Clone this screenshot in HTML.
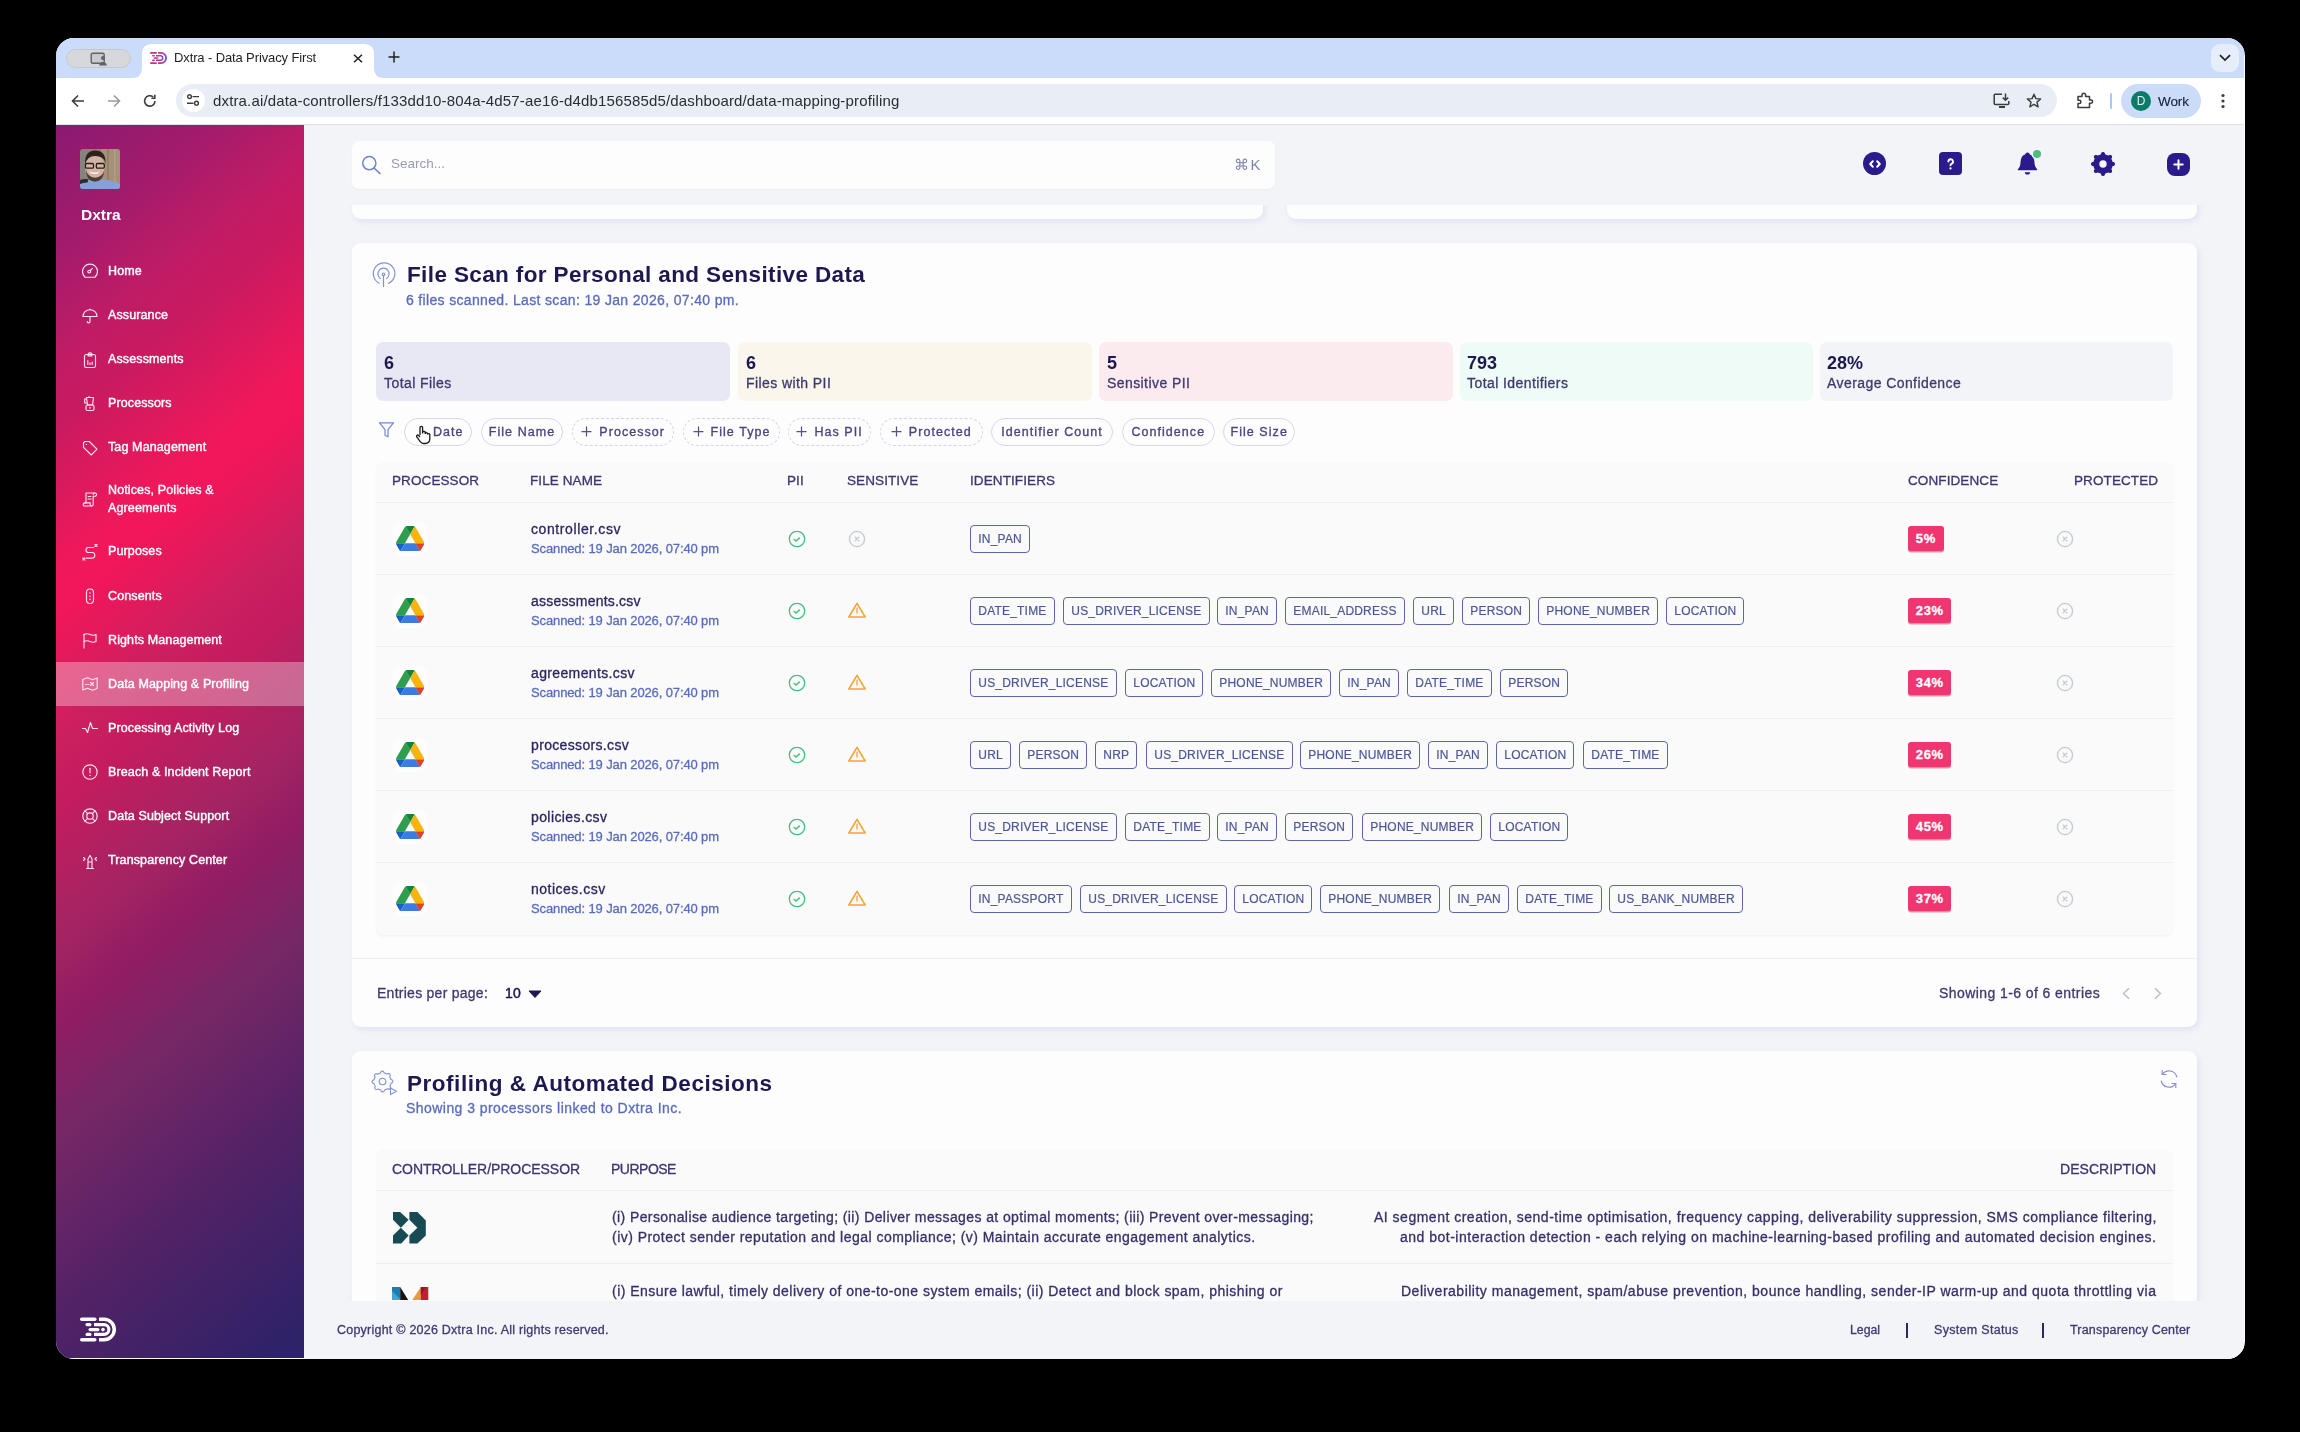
<!DOCTYPE html>
<html><head><meta charset="utf-8"><title>Dxtra</title>
<style>
html,body{margin:0;padding:0;}
body{width:2300px;height:1432px;background:#000;position:relative;overflow:hidden;font-family:"Liberation Sans", sans-serif;}
.t{position:absolute;white-space:nowrap;line-height:1;will-change:transform;}
svg{display:block;}
</style></head><body>
<div id="win" style="position:absolute;left:56px;top:38px;width:2188.5px;height:1320.5px;border-radius:18px;overflow:hidden;background:#fff;">
<div style="position:absolute;left:-56px;top:-38px;width:2300px;height:1432px;">
<div style="position:absolute;left:56px;top:38px;width:2188px;height:40px;background:#cbdcfa;"></div><div style="position:absolute;left:66px;top:49px;width:65px;height:19px;background:#d6d8dc;border:1px solid #c6c8cc;border-radius:10px;box-sizing:border-box;"></div><svg style="position:absolute;left:90px;top:52px;" width="18" height="14" viewBox="0 0 18 14"><rect x="1.2" y="1.2" width="13" height="10" rx="1.5" fill="#c9cacd" stroke="#5f6368" stroke-width="1.4"/><circle cx="13" cy="6" r="2" fill="#5f6368"/><path d="M9.2 13.5c0-2.2 1.7-3.6 3.8-3.6s3.8 1.4 3.8 3.6z" fill="#5f6368"/></svg><svg style="position:absolute;left:132px;top:44px" width="252" height="34" viewBox="0 0 252 34"><path d="M0 34 Q10 34 10 24 L10 10 Q10 0 20 0 L232 0 Q242 0 242 10 L242 24 Q242 34 252 34 Z" fill="#ffffff"/></svg><svg style="position:absolute;left:150px;top:52px;" width="17" height="12" viewBox="0 0 17 12"><defs><linearGradient id="fav" x1="0" x2="1"><stop offset="0" stop-color="#e8245a"/><stop offset="1" stop-color="#7a4fd0"/></linearGradient></defs><g fill="url(#fav)"><rect x="0" y="0" width="7" height="1.8" rx=".9"/><rect x="0" y="10.2" width="7" height="1.8" rx=".9"/><rect x="2" y="3" width="3" height="1.6" rx=".8"/><rect x="2" y="7.4" width="3" height="1.6" rx=".8"/><rect x="3.5" y="5.2" width="5" height="1.6" rx=".8"/></g><path d="M8 0.9 H11 A5.1 5.1 0 0 1 11 11.1 H8" fill="none" stroke="url(#fav)" stroke-width="1.8"/><path d="M6 3.8 H10.5 A2.2 2.2 0 0 1 10.5 8.2 H6" fill="none" stroke="url(#fav)" stroke-width="1.6"/></svg><div class="t" style="left:174px;top:51.00px;font-size:13px;font-weight:400;color:#1f1f1f;letter-spacing:-0.12px;">Dxtra - Data Privacy First</div><svg style="position:absolute;left:353px;top:54px;" width="10" height="9" viewBox="0 0 10 9"><path d="M1 0.8 L9 8.2 M9 0.8 L1 8.2" stroke="#1f1f1f" stroke-width="1.5"/></svg><svg style="position:absolute;left:388px;top:51px;" width="12" height="12" viewBox="0 0 12 12"><path d="M6 0.5 V11.5 M0.5 6 H11.5" stroke="#1f1f1f" stroke-width="1.5"/></svg><div style="position:absolute;left:2211px;top:44px;width:28px;height:28px;background:#e6eefc;border-radius:9px;"></div><svg style="position:absolute;left:2219px;top:54px;" width="12" height="8" viewBox="0 0 12 8"><path d="M1 1.2 L6 6 L11 1.2" fill="none" stroke="#1f1f1f" stroke-width="1.7"/></svg><div style="position:absolute;left:56px;top:78px;width:2188px;height:47px;background:#ffffff;border-bottom:1px solid #dfe1e5;box-sizing:border-box;"></div><svg style="position:absolute;left:71px;top:94px;" width="14" height="14" viewBox="0 0 14 14"><path d="M13 7 H2 M7 1.5 L1.5 7 L7 12.5" fill="none" stroke="#3c3c3c" stroke-width="1.6"/></svg><svg style="position:absolute;left:107px;top:94px;" width="14" height="14" viewBox="0 0 14 14"><path d="M1 7 H12 M7 1.5 L12.5 7 L7 12.5" fill="none" stroke="#9a9a9a" stroke-width="1.6"/></svg><svg style="position:absolute;left:143px;top:94px;" width="14" height="14" viewBox="0 0 14 14"><path d="M12 7 A5.2 5.2 0 1 1 10.2 3" fill="none" stroke="#3c3c3c" stroke-width="1.6"/><path d="M11.8 0.8 V4.2 H8.4" fill="none" stroke="#3c3c3c" stroke-width="1.6"/></svg><div style="position:absolute;left:176px;top:84px;width:1881px;height:33px;background:#e9eef6;border-radius:17px;"></div><div style="position:absolute;left:182px;top:89px;width:23px;height:23px;background:#ffffff;border-radius:12px;"></div><svg style="position:absolute;left:186px;top:93px;" width="15" height="14" viewBox="0 0 15 14"><circle cx="3.5" cy="3.6" r="1.9" fill="none" stroke="#3c3c3c" stroke-width="1.4"/><path d="M6.5 3.6 H13" stroke="#3c3c3c" stroke-width="1.4"/><circle cx="10.5" cy="10.2" r="1.9" fill="none" stroke="#3c3c3c" stroke-width="1.4"/><path d="M1 10.2 H7.5" stroke="#3c3c3c" stroke-width="1.4"/></svg><div class="t" style="left:213px;top:92.80px;font-size:15px;font-weight:400;color:#2a2d31;letter-spacing:0.15px;">dxtra.ai/data-controllers/f133dd10-804a-4d57-ae16-d4db156585d5/dashboard/data-mapping-profiling</div><svg style="position:absolute;left:1993px;top:93px;" width="18" height="16" viewBox="0 0 18 16"><path d="M9 1.2 H2.2 A1 1 0 0 0 1.2 2.2 V10.5 A1 1 0 0 0 2.2 11.5 H14.8 A1 1 0 0 0 15.8 10.5 V8" fill="none" stroke="#3c3c3c" stroke-width="1.5"/><path d="M12.5 0.5 V7 M9.8 4.6 L12.5 7.3 L15.2 4.6" fill="none" stroke="#3c3c3c" stroke-width="1.5"/><rect x="6" y="13" width="6" height="2" fill="#3c3c3c"/></svg><svg style="position:absolute;left:2026px;top:93px;" width="16" height="15" viewBox="0 0 16 15"><path d="M8 1.2 L9.9 5.6 L14.6 6 L11 9.1 L12.1 13.8 L8 11.3 L3.9 13.8 L5 9.1 L1.4 6 L6.1 5.6 Z" fill="none" stroke="#3c3c3c" stroke-width="1.4" stroke-linejoin="round"/></svg><svg style="position:absolute;left:2076px;top:92px;" width="18" height="17" viewBox="0 0 18 17"><path d="M2 4.5 H6 V3 A1.8 1.8 0 0 1 9.6 3 V4.5 H13.5 V8 H15 A1.6 1.6 0 0 1 15 11.2 H13.5 V15.5 H2 V11.6 H3.2 A1.7 1.7 0 0 0 3.2 8.2 H2 Z" fill="none" stroke="#3c3c3c" stroke-width="1.5" stroke-linejoin="round"/></svg><div style="position:absolute;left:2110px;top:93px;width:2px;height:16px;background:#a8c7fa;border-radius:1px;"></div><div style="position:absolute;left:2121px;top:84px;width:80px;height:34px;background:#cbdcf8;border-radius:17px;"></div><div style="position:absolute;left:2131px;top:91px;width:20px;height:20px;background:#0b7a68;border-radius:50%;"></div><div class="t" style="left:1641px;width:1000px;text-align:center;top:95.34px;font-size:12px;font-weight:400;color:#d9f5ee;letter-spacing:0px;">D</div><div class="t" style="left:2157.5px;top:94.77px;font-size:13.5px;font-weight:400;color:#17213d;letter-spacing:-0.1px;-webkit-text-stroke:0.15px #17213d;">Work</div><svg style="position:absolute;left:2220px;top:93px;" width="6" height="16" viewBox="0 0 6 16"><circle cx="3" cy="2.5" r="1.6" fill="#3c3c3c"/><circle cx="3" cy="8" r="1.6" fill="#3c3c3c"/><circle cx="3" cy="13.5" r="1.6" fill="#3c3c3c"/></svg><div style="position:absolute;left:56px;top:125px;width:248px;height:1233px;background:linear-gradient(140deg,#8b1a71 0%,#a11b6c 8.5%,#bf1c66 16%,#c91a60 21%,#f0185b 31%,#f2165a 34%,#cb2060 43%,#c51c5e 47%,#a32463 57%,#931c63 62%,#772766 70%,#522266 83%,#2e2268 98%);"></div><svg style="position:absolute;left:80px;top:149px;border-radius:3px" width="40" height="40" viewBox="0 0 40 40">
<rect width="40" height="40" fill="#85837a"/>
<rect x="21" y="0" width="19" height="40" fill="#a5917a"/>
<rect x="27" y="0" width="2" height="40" fill="#8e7a62" opacity=".7"/>
<rect x="34" y="0" width="1.5" height="40" fill="#b8a58c" opacity=".7"/>
<path d="M0 40 V33.5 Q6 30.5 11 30.5 L15 33 L19 30.5 Q30 30 40 35 V40 Z" fill="#86a1da"/>
<path d="M0 31 Q4 29.5 8.5 30.2 L7.5 33.5 Q3 33.5 0 35 Z" fill="#2e2b29"/>
<ellipse cx="15" cy="18.5" rx="10" ry="12.5" fill="#d6b3a3"/>
<path d="M5 15.5 Q4.5 1.5 15 1.5 Q26 1.5 25.5 14.5 Q24.5 7 15 7 Q7 7 5 15.5 Z" fill="#2b231e"/>
<path d="M5.8 20 Q6.5 32.5 15 32.5 Q23.5 32.5 24.6 20 Q23 28 15 28.8 Q7.5 28 5.8 20 Z" fill="#4e3d35"/>
<rect x="5.5" y="14.5" width="8" height="4.6" rx="1.2" fill="none" stroke="#1e1e1e" stroke-width="1.3"/>
<rect x="16.3" y="14.5" width="8" height="4.6" rx="1.2" fill="none" stroke="#1e1e1e" stroke-width="1.3"/>
<path d="M8.5 22.5 Q15 27.5 20 22.5 Q15 24.8 8.5 22.5 Z" fill="#ffffff"/>
</svg><div class="t" style="left:81px;top:206.98px;font-size:15.5px;font-weight:700;color:#ffffff;letter-spacing:0px;">Dxtra</div><div style="position:absolute;left:56px;top:662px;width:248px;height:43.5px;background:rgba(255,255,255,0.32);"></div><svg style="position:absolute;left:81px;top:262.3px;overflow:visible;" width="18" height="18" viewBox="0 0 18 18"><path d="M4 15.2 H14 A7.5 7.5 0 1 0 4 15.2 Z" fill="none" stroke="#ffe3f1" stroke-width="1.15" stroke-linecap="round" stroke-linejoin="round"/><circle cx="8.2" cy="9.6" r="1.4" fill="none" stroke="#ffe3f1" stroke-width="1.15" stroke-linecap="round" stroke-linejoin="round"/><path d="M9.3 8.5 L11.5 6.3" fill="none" stroke="#ffe3f1" stroke-width="1.15" stroke-linecap="round" stroke-linejoin="round"/></svg><div class="t" style="left:108px;top:264.72px;font-size:12.5px;font-weight:400;color:#ffffff;letter-spacing:0.12px;-webkit-text-stroke:0.4px #ffffff;">Home</div><svg style="position:absolute;left:81px;top:306.7px;overflow:visible;" width="18" height="18" viewBox="0 0 18 18"><path d="M2 9.5 A7 6.8 0 0 1 16 9.5 Z" fill="none" stroke="#ffe3f1" stroke-width="1.15" stroke-linecap="round" stroke-linejoin="round"/><path d="M9 9.5 V14.5 A1.4 1.4 0 0 1 6.2 14.5" fill="none" stroke="#ffe3f1" stroke-width="1.15" stroke-linecap="round" stroke-linejoin="round"/><path d="M9 2.7 V2" fill="none" stroke="#ffe3f1" stroke-width="1.15" stroke-linecap="round" stroke-linejoin="round"/></svg><div class="t" style="left:108px;top:309.12px;font-size:12.5px;font-weight:400;color:#ffffff;letter-spacing:0.12px;-webkit-text-stroke:0.4px #ffffff;">Assurance</div><svg style="position:absolute;left:81px;top:351px;overflow:visible;" width="18" height="18" viewBox="0 0 18 18"><rect x="3.5" y="3.5" width="11" height="13" rx="1.8" fill="none" stroke="#ffe3f1" stroke-width="1.15" stroke-linecap="round" stroke-linejoin="round"/><path d="M7 3.5 A2 1.6 0 0 1 11 3.5 V4.8 H7 Z" fill="none" stroke="#ffe3f1" stroke-width="1.15" stroke-linecap="round" stroke-linejoin="round"/><path d="M6.8 13.5 V9.6 M9 13.5 V11.8 M11.2 13.5 V11" fill="none" stroke="#ffe3f1" stroke-width="1.15" stroke-linecap="round" stroke-linejoin="round"/></svg><div class="t" style="left:108px;top:353.42px;font-size:12.5px;font-weight:400;color:#ffffff;letter-spacing:0.12px;-webkit-text-stroke:0.4px #ffffff;">Assessments</div><svg style="position:absolute;left:81px;top:395px;overflow:visible;" width="18" height="18" viewBox="0 0 18 18"><path d="M5.5 2.5 H12.5 L11.5 10 H6.5 Z" fill="none" stroke="#ffe3f1" stroke-width="1.15" stroke-linecap="round" stroke-linejoin="round"/><path d="M5.5 4 H3.7 V8 H5.8" fill="none" stroke="#ffe3f1" stroke-width="1.15" stroke-linecap="round" stroke-linejoin="round"/><rect x="5" y="10" width="8" height="5.5" rx="1.5" fill="none" stroke="#ffe3f1" stroke-width="1.15" stroke-linecap="round" stroke-linejoin="round"/><path d="M8.5 12.8 H9.5 M8 2.5 V1.6" fill="none" stroke="#ffe3f1" stroke-width="1.15" stroke-linecap="round" stroke-linejoin="round"/></svg><div class="t" style="left:108px;top:397.42px;font-size:12.5px;font-weight:400;color:#ffffff;letter-spacing:0.12px;-webkit-text-stroke:0.4px #ffffff;">Processors</div><svg style="position:absolute;left:81px;top:438.8px;overflow:visible;" width="18" height="18" viewBox="0 0 18 18"><path d="M2.5 3.8 V8.3 L10.2 16 L16 10.2 L8.3 2.5 H3.8 Z" fill="none" stroke="#ffe3f1" stroke-width="1.15" stroke-linecap="round" stroke-linejoin="round"/><circle cx="5.4" cy="5.4" r=".7" fill="#ffe3f1"/></svg><div class="t" style="left:108px;top:441.22px;font-size:12.5px;font-weight:400;color:#ffffff;letter-spacing:0.12px;-webkit-text-stroke:0.4px #ffffff;">Tag Management</div><svg style="position:absolute;left:81px;top:490.1px;overflow:visible;" width="18" height="18" viewBox="0 0 18 18"><path d="M5 3 H14 A1.6 1.6 0 0 1 14 6.2 H12.2 V14.5 A1.5 1.5 0 0 1 10.7 16 H3.8 A1.6 1.6 0 0 1 3.8 12.8 H5 Z" fill="none" stroke="#ffe3f1" stroke-width="1.15" stroke-linecap="round" stroke-linejoin="round"/><path d="M10.7 16 A1.5 1.5 0 0 1 9.2 14.5 V12.8 H3.8 M7.2 6.5 H10 M7.2 9 H10 M14 3 A1.6 1.6 0 0 0 12.2 4.6" fill="none" stroke="#ffe3f1" stroke-width="1.15" stroke-linecap="round" stroke-linejoin="round"/></svg><div class="t" style="left:108px;top:484.02px;font-size:12.5px;font-weight:400;color:#ffffff;letter-spacing:0.12px;-webkit-text-stroke:0.4px #ffffff;">Notices, Policies &</div><svg style="position:absolute;left:81px;top:543px;overflow:visible;" width="18" height="18" viewBox="0 0 18 18"><path d="M12.5 4.5 H7.5 A2.5 2.5 0 0 0 7.5 9.5 H11 A2.8 2.8 0 0 1 11 15.1 H5" fill="none" stroke="#ffe3f1" stroke-width="1.15" stroke-linecap="round" stroke-linejoin="round"/><path d="M14 1.5 L16 3.5 M16 1.5 L14 3.5 M1.8 15 L3.8 17 M3.8 15 L1.8 17" fill="none" stroke="#ffe3f1" stroke-width="1.15" stroke-linecap="round" stroke-linejoin="round"/></svg><div class="t" style="left:108px;top:545.42px;font-size:12.5px;font-weight:400;color:#ffffff;letter-spacing:0.12px;-webkit-text-stroke:0.4px #ffffff;">Purposes</div><svg style="position:absolute;left:81px;top:587.3px;overflow:visible;" width="18" height="18" viewBox="0 0 18 18"><rect x="5.5" y="2" width="7" height="14.5" rx="3.5" fill="none" stroke="#ffe3f1" stroke-width="1.15" stroke-linecap="round" stroke-linejoin="round"/><circle cx="9" cy="6" r=".8" fill="#ffe3f1"/><circle cx="9" cy="9.2" r=".8" fill="#ffe3f1"/><circle cx="9" cy="12.4" r=".8" fill="#ffe3f1"/></svg><div class="t" style="left:108px;top:589.72px;font-size:12.5px;font-weight:400;color:#ffffff;letter-spacing:0.12px;-webkit-text-stroke:0.4px #ffffff;">Consents</div><svg style="position:absolute;left:81px;top:631.3px;overflow:visible;" width="18" height="18" viewBox="0 0 18 18"><path d="M3 17 V3" fill="none" stroke="#ffe3f1" stroke-width="1.15" stroke-linecap="round" stroke-linejoin="round"/><path d="M3 3.5 Q6 2 9 3.5 Q12 5 15 3.5 V10.5 Q12 12 9 10.5 Q6 9 3 10.5" fill="none" stroke="#ffe3f1" stroke-width="1.15" stroke-linecap="round" stroke-linejoin="round"/></svg><div class="t" style="left:108px;top:633.72px;font-size:12.5px;font-weight:400;color:#ffffff;letter-spacing:0.12px;-webkit-text-stroke:0.4px #ffffff;">Rights Management</div><svg style="position:absolute;left:81px;top:675.3px;overflow:visible;" width="18" height="18" viewBox="0 0 18 18"><path d="M1.8 4.5 L6.5 2.8 L11.5 4.8 L16.2 3 V13.5 L11.5 15.2 L6.5 13.2 L1.8 15 Z" fill="none" stroke="#ffe3f1" stroke-width="1.15" stroke-linecap="round" stroke-linejoin="round"/><path d="M9.5 7.5 L12.5 10.5 M12.5 7.5 L9.5 10.5 M4.5 9.5 H5.5 M6.8 9.5 H7.8" fill="none" stroke="#ffe3f1" stroke-width="1.15" stroke-linecap="round" stroke-linejoin="round"/></svg><div class="t" style="left:108px;top:677.72px;font-size:12.5px;font-weight:400;color:#ffffff;letter-spacing:0.12px;-webkit-text-stroke:0.4px #ffffff;">Data Mapping &amp; Profiling</div><svg style="position:absolute;left:81px;top:719.3px;overflow:visible;" width="18" height="18" viewBox="0 0 18 18"><path d="M1.5 9.5 H4.5 L6.5 13.5 L9.5 3.5 L11.5 9.5 H16.5" fill="none" stroke="#ffe3f1" stroke-width="1.15" stroke-linecap="round" stroke-linejoin="round"/></svg><div class="t" style="left:108px;top:721.72px;font-size:12.5px;font-weight:400;color:#ffffff;letter-spacing:0.12px;-webkit-text-stroke:0.4px #ffffff;">Processing Activity Log</div><svg style="position:absolute;left:81px;top:763.3px;overflow:visible;" width="18" height="18" viewBox="0 0 18 18"><circle cx="9" cy="9" r="7.2" fill="none" stroke="#ffe3f1" stroke-width="1.15" stroke-linecap="round" stroke-linejoin="round"/><path d="M9 5.2 V9.8" fill="none" stroke="#ffe3f1" stroke-width="1.15" stroke-linecap="round" stroke-linejoin="round"/><circle cx="9" cy="12.5" r=".8" fill="#ffe3f1"/></svg><div class="t" style="left:108px;top:765.72px;font-size:12.5px;font-weight:400;color:#ffffff;letter-spacing:0.12px;-webkit-text-stroke:0.4px #ffffff;">Breach &amp; Incident Report</div><svg style="position:absolute;left:81px;top:807.4px;overflow:visible;" width="18" height="18" viewBox="0 0 18 18"><circle cx="9" cy="9" r="7.2" fill="none" stroke="#ffe3f1" stroke-width="1.15" stroke-linecap="round" stroke-linejoin="round"/><circle cx="9" cy="9" r="3.2" fill="none" stroke="#ffe3f1" stroke-width="1.15" stroke-linecap="round" stroke-linejoin="round"/><path d="M3.9 3.9 L6.7 6.7 M14.1 3.9 L11.3 6.7 M3.9 14.1 L6.7 11.3 M14.1 14.1 L11.3 11.3" fill="none" stroke="#ffe3f1" stroke-width="1.15" stroke-linecap="round" stroke-linejoin="round"/></svg><div class="t" style="left:108px;top:809.82px;font-size:12.5px;font-weight:400;color:#ffffff;letter-spacing:0.12px;-webkit-text-stroke:0.4px #ffffff;">Data Subject Support</div><svg style="position:absolute;left:81px;top:851.8px;overflow:visible;" width="18" height="18" viewBox="0 0 18 18"><path d="M7 16.5 V7 L9 3.5 L11 7 V16.5 Z M5.5 16.5 H12.5 M7 10 H11" fill="none" stroke="#ffe3f1" stroke-width="1.15" stroke-linecap="round" stroke-linejoin="round"/><path d="M2.5 5.5 L4 7 L2.5 8.5 M15.5 5.5 L14 7 L15.5 8.5" fill="none" stroke="#ffe3f1" stroke-width="1.15" stroke-linecap="round" stroke-linejoin="round"/></svg><div class="t" style="left:108px;top:854.22px;font-size:12.5px;font-weight:400;color:#ffffff;letter-spacing:0.12px;-webkit-text-stroke:0.4px #ffffff;">Transparency Center</div><div class="t" style="left:108px;top:502.42px;font-size:12.5px;font-weight:400;color:#ffffff;letter-spacing:0.12px;-webkit-text-stroke:0.4px #ffffff;">Agreements</div><svg style="position:absolute;left:80px;top:1317px;" width="37" height="25" viewBox="0 0 37 25"><g fill="#ffffff"><rect x="0" y="0.5" width="16.5" height="3.5" rx="1.75"/><rect x="0" y="21" width="16.5" height="3.5" rx="1.75"/><rect x="5.5" y="6" width="6" height="3.2" rx="1.6"/><rect x="5.5" y="15.8" width="6" height="3.2" rx="1.6"/><rect x="8.5" y="11" width="11" height="3.2" rx="1.6"/><circle cx="23" cy="12.6" r="1.8"/></g><path d="M19 2.25 H24 A10.25 10.25 0 0 1 24 22.75 H19" fill="none" stroke="#fff" stroke-width="3.5"/><path d="M14 7.6 H24 A4.9 4.9 0 0 1 24 17.4 H14" fill="none" stroke="#fff" stroke-width="3.2"/></svg><div style="position:absolute;left:304px;top:125px;width:1940px;height:1233px;background:#f3f4f8;"></div><div style="position:absolute;left:352px;top:150px;width:911px;height:68.5px;background:#fdfdfd;border-radius:9px;box-shadow:2px 3px 6px rgba(93,80,200,0.10);"></div><div style="position:absolute;left:1287px;top:150px;width:910px;height:68.5px;background:#fdfdfd;border-radius:9px;box-shadow:2px 3px 6px rgba(93,80,200,0.10);"></div><div style="position:absolute;left:304px;top:125px;width:1940px;height:79.5px;background:#f3f4f8;"></div><div style="position:absolute;left:352px;top:141px;width:923px;height:48px;background:#fdfdfe;border-radius:7px;box-shadow:0 1px 2px rgba(60,60,120,0.04);"></div><svg style="position:absolute;left:360px;top:154px;" width="24" height="24" viewBox="0 0 24 24"><circle cx="9.3" cy="9.2" r="6.6" fill="none" stroke="#6f84cc" stroke-width="1.5"/><path d="M14 14 L20 19.6" stroke="#6f84cc" stroke-width="1.5" stroke-linecap="round"/></svg><div class="t" style="left:391px;top:157.47px;font-size:13.5px;font-weight:400;color:#9a9ab3;letter-spacing:0px;">Search...</div><div class="t" style="right:1037.5px;top:157.30px;font-size:15px;font-weight:400;color:#7f84ad;letter-spacing:1.5px;">⌘K</div><div style="position:absolute;left:1863.1px;top:152.1px;width:23.4px;height:23.4px;background:#2a1a8c;border-radius:50%;"></div><svg style="position:absolute;left:1866px;top:155px;" width="18" height="18" viewBox="0 0 18 18"><path d="M6.8 6.3 L4.2 9 L6.8 11.7 M11.2 6.3 L13.8 9 L11.2 11.7" fill="none" stroke="#fff" stroke-width="2" stroke-linecap="round" stroke-linejoin="round"/></svg><div style="position:absolute;left:1939.4px;top:152.4px;width:23px;height:23px;background:#2a1a8c;border-radius:4px;"></div><svg style="position:absolute;left:1939.4px;top:152.4px;" width="23" height="23" viewBox="0 0 23 23"><path d="M9.4 9.6 A2.3 2.3 0 1 1 12.3 11.8 Q11.5 12.2 11.5 13.3" fill="none" stroke="#fff" stroke-width="1.9" stroke-linecap="round"/><circle cx="11.5" cy="16.4" r="1.1" fill="#fff"/></svg><svg style="position:absolute;left:2015px;top:150px;" width="26" height="27" viewBox="0 0 26 27"><path d="M12.5 2.5 Q10.5 2.5 10.3 4.2 Q6 5.8 5.6 11.5 Q5.4 16.5 3.5 18.5 Q2.2 19.7 3 20.2 H22 Q22.8 19.7 21.5 18.5 Q19.6 16.5 19.4 11.5 Q19 5.8 14.7 4.2 Q14.5 2.5 12.5 2.5Z" fill="#2a1a8c"/><path d="M9.8 22.2 H15.2 A2.7 2.3 0 0 1 9.8 22.2Z" fill="#2a1a8c"/></svg><div style="position:absolute;left:2033.2px;top:149.9px;width:8px;height:8px;background:#4cbf80;border-radius:50%;box-shadow:0 0 0 1.5px #f3f4f8;"></div><svg style="position:absolute;left:2090.8px;top:151.9px;" width="24" height="24" viewBox="0 0 24 24"><polygon points="23.50,12.00 23.01,13.08 21.02,13.79 20.80,14.67 20.50,15.52 20.11,16.34 19.65,17.11 20.56,19.02 20.13,20.13 19.02,20.56 17.11,19.65 16.34,20.11 15.52,20.50 14.67,20.80 13.79,21.02 13.08,23.01 12.00,23.50 10.92,23.01 10.21,21.02 9.33,20.80 8.48,20.50 7.66,20.11 6.89,19.65 4.98,20.56 3.87,20.13 3.44,19.02 4.35,17.11 3.89,16.34 3.50,15.52 3.20,14.67 2.98,13.79 0.99,13.08 0.50,12.00 0.99,10.92 2.98,10.21 3.20,9.33 3.50,8.48 3.89,7.66 4.35,6.89 3.44,4.98 3.87,3.87 4.98,3.44 6.89,4.35 7.66,3.89 8.48,3.50 9.33,3.20 10.21,2.98 10.92,0.99 12.00,0.50 13.08,0.99 13.79,2.98 14.67,3.20 15.52,3.50 16.34,3.89 17.11,4.35 19.02,3.44 20.13,3.87 20.56,4.98 19.65,6.89 20.11,7.66 20.50,8.48 20.80,9.33 21.02,10.21 23.01,10.92" fill="#2a1a8c" stroke="#2a1a8c" stroke-width="1.2" stroke-linejoin="round"/><circle cx="12" cy="12" r="3.7" fill="#f3f4f8"/></svg><div style="position:absolute;left:2167.4px;top:152.6px;width:23px;height:23px;background:#2a1a8c;border-radius:8px;"></div><svg style="position:absolute;left:2167.4px;top:152.6px;" width="23" height="23" viewBox="0 0 23 23"><path d="M11.5 7.3 V15.7 M7.3 11.5 H15.7" stroke="#fff" stroke-width="2" stroke-linecap="round"/></svg><div style="position:absolute;left:352px;top:243px;width:1845px;height:784px;background:#fdfdfd;border-radius:9px;box-shadow:2px 3px 6px rgba(93,80,200,0.10);"></div><svg style="position:absolute;left:370px;top:261px;" width="27" height="27" viewBox="0 0 27 27"><g fill="none" stroke="#8192d2" stroke-width="1.2" stroke-linecap="round"><path d="M9.2 22.2 A10.8 10.8 0 1 1 18.6 22.4"/><path d="M10.4 17.4 A5.6 5.6 0 1 1 16.6 17.4"/><circle cx="13.5" cy="13.3" r="1.3"/><path d="M13.5 14.8 V25.5"/></g></svg><div class="t" style="left:407px;top:263.95px;font-size:22.5px;font-weight:700;color:#1c1850;letter-spacing:0.38px;">File Scan for Personal and Sensitive Data</div><div class="t" style="left:406px;top:292.75px;font-size:14px;font-weight:400;color:#5a6bbf;letter-spacing:0.34px;-webkit-text-stroke:0.3px #5a6bbf;">6 files scanned. Last scan: 19 Jan 2026, 07:40 pm.</div><div style="position:absolute;left:376px;top:341.5px;width:353.5px;height:59.5px;background:#e8e8f4;border-radius:7px;"></div><div class="t" style="left:383.5px;top:353.96px;font-size:18px;font-weight:700;color:#1c1850;letter-spacing:0px;">6</div><div class="t" style="left:383.5px;top:376.35px;font-size:14px;font-weight:400;color:#3e3970;letter-spacing:0.42px;-webkit-text-stroke:0.3px #3e3970;">Total Files</div><div style="position:absolute;left:738px;top:341.5px;width:353.5px;height:59.5px;background:#faf6ec;border-radius:7px;"></div><div class="t" style="left:745.5px;top:353.96px;font-size:18px;font-weight:700;color:#1c1850;letter-spacing:0px;">6</div><div class="t" style="left:745.5px;top:376.35px;font-size:14px;font-weight:400;color:#3e3970;letter-spacing:0.42px;-webkit-text-stroke:0.3px #3e3970;">Files with PII</div><div style="position:absolute;left:1099px;top:341.5px;width:353.5px;height:59.5px;background:#fbebef;border-radius:7px;"></div><div class="t" style="left:1106.5px;top:353.96px;font-size:18px;font-weight:700;color:#1c1850;letter-spacing:0px;">5</div><div class="t" style="left:1106.5px;top:376.35px;font-size:14px;font-weight:400;color:#3e3970;letter-spacing:0.42px;-webkit-text-stroke:0.3px #3e3970;">Sensitive PII</div><div style="position:absolute;left:1459.5px;top:341.5px;width:353.5px;height:59.5px;background:#eefbf6;border-radius:7px;"></div><div class="t" style="left:1467.0px;top:353.96px;font-size:18px;font-weight:700;color:#1c1850;letter-spacing:0px;">793</div><div class="t" style="left:1467.0px;top:376.35px;font-size:14px;font-weight:400;color:#3e3970;letter-spacing:0.42px;-webkit-text-stroke:0.3px #3e3970;">Total Identifiers</div><div style="position:absolute;left:1819.5px;top:341.5px;width:353.5px;height:59.5px;background:#f3f4f8;border-radius:7px;"></div><div class="t" style="left:1827.0px;top:353.96px;font-size:18px;font-weight:700;color:#1c1850;letter-spacing:0px;">28%</div><div class="t" style="left:1827.0px;top:376.35px;font-size:14px;font-weight:400;color:#3e3970;letter-spacing:0.42px;-webkit-text-stroke:0.3px #3e3970;">Average Confidence</div><svg style="position:absolute;left:378px;top:421px;" width="17" height="18" viewBox="0 0 17 18"><path d="M1.5 1.8 H15.5 L10 8.6 V15.8 L7 14.2 V8.6 Z" fill="none" stroke="#7088d8" stroke-width="1.2" stroke-linejoin="round"/></svg><div style="position:absolute;left:404px;top:418px;width:67.5px;height:27.5px;box-sizing:border-box;border:1px solid #d5d7ec;border-radius:14px;display:flex;align-items:center;justify-content:flex-end;padding-right:7px;font-size:12.5px;font-weight:400;color:#4a4580;letter-spacing:1.05px;-webkit-text-stroke:0.35px #4a4580;will-change:transform;white-space:nowrap;padding-left:0px">Date</div><div style="position:absolute;left:480.6px;top:418px;width:82.0px;height:27.5px;box-sizing:border-box;border:1px solid #d5d7ec;border-radius:14px;display:flex;align-items:center;justify-content:center;font-size:12.5px;font-weight:400;color:#4a4580;letter-spacing:1.05px;-webkit-text-stroke:0.35px #4a4580;will-change:transform;white-space:nowrap;padding-left:0px">File Name</div><div style="position:absolute;left:571.7px;top:418px;width:102.29999999999995px;height:27.5px;box-sizing:border-box;border:1px dashed #d3d5e6;border-radius:14px;display:flex;align-items:center;justify-content:center;font-size:12.5px;font-weight:400;color:#4a4580;letter-spacing:1.05px;-webkit-text-stroke:0.35px #4a4580;will-change:transform;white-space:nowrap;padding-left:0px"><svg width="11" height="11" viewBox="0 0 11 11" style="margin-right:7px;flex:none"><path d="M5.5 0.5 V10.5 M0.5 5.5 H10.5" stroke="#55508a" stroke-width="1.25"/></svg>Processor</div><div style="position:absolute;left:683px;top:418px;width:97px;height:27.5px;box-sizing:border-box;border:1px dashed #d3d5e6;border-radius:14px;display:flex;align-items:center;justify-content:center;font-size:12.5px;font-weight:400;color:#4a4580;letter-spacing:1.05px;-webkit-text-stroke:0.35px #4a4580;will-change:transform;white-space:nowrap;padding-left:0px"><svg width="11" height="11" viewBox="0 0 11 11" style="margin-right:7px;flex:none"><path d="M5.5 0.5 V10.5 M0.5 5.5 H10.5" stroke="#55508a" stroke-width="1.25"/></svg>File Type</div><div style="position:absolute;left:788.4px;top:418px;width:83.20000000000005px;height:27.5px;box-sizing:border-box;border:1px dashed #d3d5e6;border-radius:14px;display:flex;align-items:center;justify-content:center;font-size:12.5px;font-weight:400;color:#4a4580;letter-spacing:1.05px;-webkit-text-stroke:0.35px #4a4580;will-change:transform;white-space:nowrap;padding-left:0px"><svg width="11" height="11" viewBox="0 0 11 11" style="margin-right:7px;flex:none"><path d="M5.5 0.5 V10.5 M0.5 5.5 H10.5" stroke="#55508a" stroke-width="1.25"/></svg>Has PII</div><div style="position:absolute;left:880.2px;top:418px;width:102.59999999999991px;height:27.5px;box-sizing:border-box;border:1px dashed #d3d5e6;border-radius:14px;display:flex;align-items:center;justify-content:center;font-size:12.5px;font-weight:400;color:#4a4580;letter-spacing:1.05px;-webkit-text-stroke:0.35px #4a4580;will-change:transform;white-space:nowrap;padding-left:0px"><svg width="11" height="11" viewBox="0 0 11 11" style="margin-right:7px;flex:none"><path d="M5.5 0.5 V10.5 M0.5 5.5 H10.5" stroke="#55508a" stroke-width="1.25"/></svg>Protected</div><div style="position:absolute;left:991.2px;top:418px;width:122.20000000000005px;height:27.5px;box-sizing:border-box;border:1px solid #d5d7ec;border-radius:14px;display:flex;align-items:center;justify-content:center;font-size:12.5px;font-weight:400;color:#4a4580;letter-spacing:1.05px;-webkit-text-stroke:0.35px #4a4580;will-change:transform;white-space:nowrap;padding-left:0px">Identifier Count</div><div style="position:absolute;left:1122px;top:418px;width:92.59999999999991px;height:27.5px;box-sizing:border-box;border:1px solid #d5d7ec;border-radius:14px;display:flex;align-items:center;justify-content:center;font-size:12.5px;font-weight:400;color:#4a4580;letter-spacing:1.05px;-webkit-text-stroke:0.35px #4a4580;will-change:transform;white-space:nowrap;padding-left:0px">Confidence</div><div style="position:absolute;left:1223.2px;top:418px;width:72.39999999999986px;height:27.5px;box-sizing:border-box;border:1px solid #d5d7ec;border-radius:14px;display:flex;align-items:center;justify-content:center;font-size:12.5px;font-weight:400;color:#4a4580;letter-spacing:1.05px;-webkit-text-stroke:0.35px #4a4580;will-change:transform;white-space:nowrap;padding-left:0px">File Size</div><svg style="position:absolute;left:414.5px;top:425px;" width="17" height="21" viewBox="0 0 17 21"><path d="M5 10 V2.6 A1.3 1.3 0 0 1 7.6 2.6 V8.5 M7.6 7.6 A1.3 1.3 0 0 1 10.2 7.8 V9 M10.2 8.2 A1.3 1.3 0 0 1 12.6 8.5 V9.5 M12.6 9.2 A1.2 1.2 0 0 1 14.8 9.7 V13.5 Q14.8 18.5 10 18.5 H8.8 Q6.5 18.5 5 16.3 L1.6 11.6 A1.2 1.2 0 0 1 3.4 10.2 L5 12" fill="#fff" stroke="#1a1a1a" stroke-width="1.3" stroke-linejoin="round"/></svg><div style="position:absolute;left:376px;top:461.5px;width:1797px;height:473px;background:#fafafa;border-radius:8px;box-shadow:0 2px 3px rgba(80,80,140,0.05);"></div><div class="t" style="left:391.6px;top:474.47px;font-size:13.5px;font-weight:400;color:#3b3670;letter-spacing:0.1px;-webkit-text-stroke:0.3px #3b3670;">PROCESSOR</div><div class="t" style="left:530px;top:474.47px;font-size:13.5px;font-weight:400;color:#3b3670;letter-spacing:0.1px;-webkit-text-stroke:0.3px #3b3670;">FILE NAME</div><div class="t" style="left:787px;top:474.47px;font-size:13.5px;font-weight:400;color:#3b3670;letter-spacing:0.1px;-webkit-text-stroke:0.3px #3b3670;">PII</div><div class="t" style="left:847px;top:474.47px;font-size:13.5px;font-weight:400;color:#3b3670;letter-spacing:0.1px;-webkit-text-stroke:0.3px #3b3670;">SENSITIVE</div><div class="t" style="left:970px;top:474.47px;font-size:13.5px;font-weight:400;color:#3b3670;letter-spacing:0.1px;-webkit-text-stroke:0.3px #3b3670;">IDENTIFIERS</div><div class="t" style="left:1907.5px;top:474.47px;font-size:13.5px;font-weight:400;color:#3b3670;letter-spacing:0.1px;-webkit-text-stroke:0.3px #3b3670;">CONFIDENCE</div><div class="t" style="left:2073.5px;top:474.47px;font-size:13.5px;font-weight:400;color:#3b3670;letter-spacing:0.1px;-webkit-text-stroke:0.3px #3b3670;">PROTECTED</div><div style="position:absolute;left:376px;top:501.5px;width:1797px;height:1px;background:#eeeef2;"></div><div style="position:absolute;left:376px;top:573.5px;width:1797px;height:1px;background:#eeeef2;"></div><div style="position:absolute;left:393px;top:521.5px;width:34px;height:34px;background:#fdfdfd;border-radius:8px;"></div><div style="position:absolute;left:396.2px;top:525.8px"><svg width="28.3" height="25.5" viewBox="0 0 87.3 78"><path d="m6.6 66.85 3.85 6.65c.8 1.4 1.95 2.5 3.3 3.3l13.75-23.8h-27.5c0 1.55.4 3.1 1.2 4.5z" fill="#1a5fc8"/><path d="m43.65 25-13.75-23.8c-1.35.8-2.5 1.9-3.3 3.3l-25.4 44a9.06 9.06 0 0 0 -1.2 4.5h27.5z" fill="#2f9e4b"/><path d="m73.55 76.8c1.35-.8 2.5-1.9 3.3-3.3l1.6-2.75 7.65-13.25c.8-1.4 1.2-2.95 1.2-4.5h-27.502l5.852 11.5z" fill="#df4030"/><path d="m43.65 25 13.75-23.8c-1.35-.8-2.9-1.2-4.5-1.2h-18.5c-1.6 0-3.15.45-4.5 1.2z" fill="#17823a"/><path d="m59.8 53h-32.3l-13.75 23.8c1.35.8 2.9 1.2 4.5 1.2h50.8c1.6 0 3.15-.45 4.5-1.2z" fill="#3a7be6"/><path d="m73.4 26.5-12.7-22c-.8-1.4-1.95-2.5-3.3-3.3l-13.75 23.8 16.15 28h27.45c0-1.55-.4-3.1-1.2-4.5z" fill="#f7b50c"/></svg></div><div class="t" style="left:530.5px;top:522.15px;font-size:14px;font-weight:400;color:#2a2660;letter-spacing:0.6px;-webkit-text-stroke:0.3px #2a2660;">controller.csv</div><div class="t" style="left:530.5px;top:542.20px;font-size:13px;font-weight:400;color:#5a6bbf;letter-spacing:-0.12px;-webkit-text-stroke:0.3px #5a6bbf;">Scanned: 19 Jan 2026, 07:40 pm</div><svg style="position:absolute;left:787.7px;top:529.5px;" width="18" height="18" viewBox="0 0 18 18"><circle cx="9" cy="9" r="7.7" fill="none" stroke="#45bd80" stroke-width="1.3"/><path d="M6.3 9.5 L8 11 L11.4 8" fill="none" stroke="#45bd80" stroke-width="1.6" stroke-linecap="round" stroke-linejoin="round"/></svg><svg style="position:absolute;left:847.7px;top:529.5px;" width="18" height="18" viewBox="0 0 18 18"><circle cx="9" cy="9" r="7.6" fill="none" stroke="#c5cbd1" stroke-width="1.4"/><path d="M7.2 7.2 L10.8 10.8 M10.8 7.2 L7.2 10.8" stroke="#c5cbd1" stroke-width="1.3" stroke-linecap="round"/></svg><div style="position:absolute;left:970px;top:524.5px;white-space:nowrap;display:flex"><span style="display:inline-block;box-sizing:border-box;height:28px;line-height:27px;padding:0 7.1px 0 7.3px;border:1.5px solid #5d67a8;border-radius:4px;font-size:12px;color:#4b5798;margin-right:8px;letter-spacing:0.2px;-webkit-text-stroke:0.2px #4b5798;will-change:transform">IN_PAN</span></div><div style="position:absolute;left:1907.8px;top:525.8px;height:25.5px;padding:0 7.8px 0 8px;background:#f03571;border-radius:3px;color:#fff;font-size:13px;font-weight:700;line-height:25.5px;letter-spacing:0.6px;-webkit-text-stroke:0.3px #fff;box-shadow:0 1.5px 0 rgba(170,30,80,.45)">5%</div><svg style="position:absolute;left:2056px;top:529.7px;" width="18" height="18" viewBox="0 0 18 18"><circle cx="9" cy="9" r="7.6" fill="none" stroke="#c5cbd1" stroke-width="1.4"/><path d="M7.2 7.2 L10.8 10.8 M10.8 7.2 L7.2 10.8" stroke="#c5cbd1" stroke-width="1.3" stroke-linecap="round"/></svg><div style="position:absolute;left:376px;top:645.5px;width:1797px;height:1px;background:#eeeef2;"></div><div style="position:absolute;left:393px;top:593.5px;width:34px;height:34px;background:#fdfdfd;border-radius:8px;"></div><div style="position:absolute;left:396.2px;top:597.8px"><svg width="28.3" height="25.5" viewBox="0 0 87.3 78"><path d="m6.6 66.85 3.85 6.65c.8 1.4 1.95 2.5 3.3 3.3l13.75-23.8h-27.5c0 1.55.4 3.1 1.2 4.5z" fill="#1a5fc8"/><path d="m43.65 25-13.75-23.8c-1.35.8-2.5 1.9-3.3 3.3l-25.4 44a9.06 9.06 0 0 0 -1.2 4.5h27.5z" fill="#2f9e4b"/><path d="m73.55 76.8c1.35-.8 2.5-1.9 3.3-3.3l1.6-2.75 7.65-13.25c.8-1.4 1.2-2.95 1.2-4.5h-27.502l5.852 11.5z" fill="#df4030"/><path d="m43.65 25 13.75-23.8c-1.35-.8-2.9-1.2-4.5-1.2h-18.5c-1.6 0-3.15.45-4.5 1.2z" fill="#17823a"/><path d="m59.8 53h-32.3l-13.75 23.8c1.35.8 2.9 1.2 4.5 1.2h50.8c1.6 0 3.15-.45 4.5-1.2z" fill="#3a7be6"/><path d="m73.4 26.5-12.7-22c-.8-1.4-1.95-2.5-3.3-3.3l-13.75 23.8 16.15 28h27.45c0-1.55-.4-3.1-1.2-4.5z" fill="#f7b50c"/></svg></div><div class="t" style="left:530.5px;top:594.15px;font-size:14px;font-weight:400;color:#2a2660;letter-spacing:0.21px;-webkit-text-stroke:0.3px #2a2660;">assessments.csv</div><div class="t" style="left:530.5px;top:614.20px;font-size:13px;font-weight:400;color:#5a6bbf;letter-spacing:-0.12px;-webkit-text-stroke:0.3px #5a6bbf;">Scanned: 19 Jan 2026, 07:40 pm</div><svg style="position:absolute;left:787.7px;top:601.5px;" width="18" height="18" viewBox="0 0 18 18"><circle cx="9" cy="9" r="7.7" fill="none" stroke="#45bd80" stroke-width="1.3"/><path d="M6.3 9.5 L8 11 L11.4 8" fill="none" stroke="#45bd80" stroke-width="1.6" stroke-linecap="round" stroke-linejoin="round"/></svg><svg style="position:absolute;left:846.7px;top:600.0px;" width="20" height="20" viewBox="0 0 20 20"><path d="M10 3.3 L18.2 17 H1.8 Z" fill="none" stroke="#f2a43a" stroke-width="1.6" stroke-linejoin="round"/><path d="M10 8 V13.2" stroke="#f0a53e" stroke-width="1.3" stroke-linecap="round"/></svg><div style="position:absolute;left:970px;top:596.5px;white-space:nowrap;display:flex"><span style="display:inline-block;box-sizing:border-box;height:28px;line-height:27px;padding:0 7.1px 0 7.3px;border:1.5px solid #5d67a8;border-radius:4px;font-size:12px;color:#4b5798;margin-right:8px;letter-spacing:0.2px;-webkit-text-stroke:0.2px #4b5798;will-change:transform">DATE_TIME</span><span style="display:inline-block;box-sizing:border-box;height:28px;line-height:27px;padding:0 7.1px 0 7.3px;border:1.5px solid #5d67a8;border-radius:4px;font-size:12px;color:#4b5798;margin-right:8px;letter-spacing:0.2px;-webkit-text-stroke:0.2px #4b5798;will-change:transform">US_DRIVER_LICENSE</span><span style="display:inline-block;box-sizing:border-box;height:28px;line-height:27px;padding:0 7.1px 0 7.3px;border:1.5px solid #5d67a8;border-radius:4px;font-size:12px;color:#4b5798;margin-right:8px;letter-spacing:0.2px;-webkit-text-stroke:0.2px #4b5798;will-change:transform">IN_PAN</span><span style="display:inline-block;box-sizing:border-box;height:28px;line-height:27px;padding:0 7.1px 0 7.3px;border:1.5px solid #5d67a8;border-radius:4px;font-size:12px;color:#4b5798;margin-right:8px;letter-spacing:0.2px;-webkit-text-stroke:0.2px #4b5798;will-change:transform">EMAIL_ADDRESS</span><span style="display:inline-block;box-sizing:border-box;height:28px;line-height:27px;padding:0 7.1px 0 7.3px;border:1.5px solid #5d67a8;border-radius:4px;font-size:12px;color:#4b5798;margin-right:8px;letter-spacing:0.2px;-webkit-text-stroke:0.2px #4b5798;will-change:transform">URL</span><span style="display:inline-block;box-sizing:border-box;height:28px;line-height:27px;padding:0 7.1px 0 7.3px;border:1.5px solid #5d67a8;border-radius:4px;font-size:12px;color:#4b5798;margin-right:8px;letter-spacing:0.2px;-webkit-text-stroke:0.2px #4b5798;will-change:transform">PERSON</span><span style="display:inline-block;box-sizing:border-box;height:28px;line-height:27px;padding:0 7.1px 0 7.3px;border:1.5px solid #5d67a8;border-radius:4px;font-size:12px;color:#4b5798;margin-right:8px;letter-spacing:0.2px;-webkit-text-stroke:0.2px #4b5798;will-change:transform">PHONE_NUMBER</span><span style="display:inline-block;box-sizing:border-box;height:28px;line-height:27px;padding:0 7.1px 0 7.3px;border:1.5px solid #5d67a8;border-radius:4px;font-size:12px;color:#4b5798;margin-right:8px;letter-spacing:0.2px;-webkit-text-stroke:0.2px #4b5798;will-change:transform">LOCATION</span></div><div style="position:absolute;left:1907.8px;top:597.8px;height:25.5px;padding:0 7.8px 0 8px;background:#f03571;border-radius:3px;color:#fff;font-size:13px;font-weight:700;line-height:25.5px;letter-spacing:0.6px;-webkit-text-stroke:0.3px #fff;box-shadow:0 1.5px 0 rgba(170,30,80,.45)">23%</div><svg style="position:absolute;left:2056px;top:601.7px;" width="18" height="18" viewBox="0 0 18 18"><circle cx="9" cy="9" r="7.6" fill="none" stroke="#c5cbd1" stroke-width="1.4"/><path d="M7.2 7.2 L10.8 10.8 M10.8 7.2 L7.2 10.8" stroke="#c5cbd1" stroke-width="1.3" stroke-linecap="round"/></svg><div style="position:absolute;left:376px;top:717.5px;width:1797px;height:1px;background:#eeeef2;"></div><div style="position:absolute;left:393px;top:665.5px;width:34px;height:34px;background:#fdfdfd;border-radius:8px;"></div><div style="position:absolute;left:396.2px;top:669.8px"><svg width="28.3" height="25.5" viewBox="0 0 87.3 78"><path d="m6.6 66.85 3.85 6.65c.8 1.4 1.95 2.5 3.3 3.3l13.75-23.8h-27.5c0 1.55.4 3.1 1.2 4.5z" fill="#1a5fc8"/><path d="m43.65 25-13.75-23.8c-1.35.8-2.5 1.9-3.3 3.3l-25.4 44a9.06 9.06 0 0 0 -1.2 4.5h27.5z" fill="#2f9e4b"/><path d="m73.55 76.8c1.35-.8 2.5-1.9 3.3-3.3l1.6-2.75 7.65-13.25c.8-1.4 1.2-2.95 1.2-4.5h-27.502l5.852 11.5z" fill="#df4030"/><path d="m43.65 25 13.75-23.8c-1.35-.8-2.9-1.2-4.5-1.2h-18.5c-1.6 0-3.15.45-4.5 1.2z" fill="#17823a"/><path d="m59.8 53h-32.3l-13.75 23.8c1.35.8 2.9 1.2 4.5 1.2h50.8c1.6 0 3.15-.45 4.5-1.2z" fill="#3a7be6"/><path d="m73.4 26.5-12.7-22c-.8-1.4-1.95-2.5-3.3-3.3l-13.75 23.8 16.15 28h27.45c0-1.55-.4-3.1-1.2-4.5z" fill="#f7b50c"/></svg></div><div class="t" style="left:530.5px;top:666.15px;font-size:14px;font-weight:400;color:#2a2660;letter-spacing:0.36px;-webkit-text-stroke:0.3px #2a2660;">agreements.csv</div><div class="t" style="left:530.5px;top:686.20px;font-size:13px;font-weight:400;color:#5a6bbf;letter-spacing:-0.12px;-webkit-text-stroke:0.3px #5a6bbf;">Scanned: 19 Jan 2026, 07:40 pm</div><svg style="position:absolute;left:787.7px;top:673.5px;" width="18" height="18" viewBox="0 0 18 18"><circle cx="9" cy="9" r="7.7" fill="none" stroke="#45bd80" stroke-width="1.3"/><path d="M6.3 9.5 L8 11 L11.4 8" fill="none" stroke="#45bd80" stroke-width="1.6" stroke-linecap="round" stroke-linejoin="round"/></svg><svg style="position:absolute;left:846.7px;top:672.0px;" width="20" height="20" viewBox="0 0 20 20"><path d="M10 3.3 L18.2 17 H1.8 Z" fill="none" stroke="#f2a43a" stroke-width="1.6" stroke-linejoin="round"/><path d="M10 8 V13.2" stroke="#f0a53e" stroke-width="1.3" stroke-linecap="round"/></svg><div style="position:absolute;left:970px;top:668.5px;white-space:nowrap;display:flex"><span style="display:inline-block;box-sizing:border-box;height:28px;line-height:27px;padding:0 7.1px 0 7.3px;border:1.5px solid #5d67a8;border-radius:4px;font-size:12px;color:#4b5798;margin-right:8px;letter-spacing:0.2px;-webkit-text-stroke:0.2px #4b5798;will-change:transform">US_DRIVER_LICENSE</span><span style="display:inline-block;box-sizing:border-box;height:28px;line-height:27px;padding:0 7.1px 0 7.3px;border:1.5px solid #5d67a8;border-radius:4px;font-size:12px;color:#4b5798;margin-right:8px;letter-spacing:0.2px;-webkit-text-stroke:0.2px #4b5798;will-change:transform">LOCATION</span><span style="display:inline-block;box-sizing:border-box;height:28px;line-height:27px;padding:0 7.1px 0 7.3px;border:1.5px solid #5d67a8;border-radius:4px;font-size:12px;color:#4b5798;margin-right:8px;letter-spacing:0.2px;-webkit-text-stroke:0.2px #4b5798;will-change:transform">PHONE_NUMBER</span><span style="display:inline-block;box-sizing:border-box;height:28px;line-height:27px;padding:0 7.1px 0 7.3px;border:1.5px solid #5d67a8;border-radius:4px;font-size:12px;color:#4b5798;margin-right:8px;letter-spacing:0.2px;-webkit-text-stroke:0.2px #4b5798;will-change:transform">IN_PAN</span><span style="display:inline-block;box-sizing:border-box;height:28px;line-height:27px;padding:0 7.1px 0 7.3px;border:1.5px solid #5d67a8;border-radius:4px;font-size:12px;color:#4b5798;margin-right:8px;letter-spacing:0.2px;-webkit-text-stroke:0.2px #4b5798;will-change:transform">DATE_TIME</span><span style="display:inline-block;box-sizing:border-box;height:28px;line-height:27px;padding:0 7.1px 0 7.3px;border:1.5px solid #5d67a8;border-radius:4px;font-size:12px;color:#4b5798;margin-right:8px;letter-spacing:0.2px;-webkit-text-stroke:0.2px #4b5798;will-change:transform">PERSON</span></div><div style="position:absolute;left:1907.8px;top:669.8px;height:25.5px;padding:0 7.8px 0 8px;background:#f03571;border-radius:3px;color:#fff;font-size:13px;font-weight:700;line-height:25.5px;letter-spacing:0.6px;-webkit-text-stroke:0.3px #fff;box-shadow:0 1.5px 0 rgba(170,30,80,.45)">34%</div><svg style="position:absolute;left:2056px;top:673.7px;" width="18" height="18" viewBox="0 0 18 18"><circle cx="9" cy="9" r="7.6" fill="none" stroke="#c5cbd1" stroke-width="1.4"/><path d="M7.2 7.2 L10.8 10.8 M10.8 7.2 L7.2 10.8" stroke="#c5cbd1" stroke-width="1.3" stroke-linecap="round"/></svg><div style="position:absolute;left:376px;top:789.5px;width:1797px;height:1px;background:#eeeef2;"></div><div style="position:absolute;left:393px;top:737.5px;width:34px;height:34px;background:#fdfdfd;border-radius:8px;"></div><div style="position:absolute;left:396.2px;top:741.8px"><svg width="28.3" height="25.5" viewBox="0 0 87.3 78"><path d="m6.6 66.85 3.85 6.65c.8 1.4 1.95 2.5 3.3 3.3l13.75-23.8h-27.5c0 1.55.4 3.1 1.2 4.5z" fill="#1a5fc8"/><path d="m43.65 25-13.75-23.8c-1.35.8-2.5 1.9-3.3 3.3l-25.4 44a9.06 9.06 0 0 0 -1.2 4.5h27.5z" fill="#2f9e4b"/><path d="m73.55 76.8c1.35-.8 2.5-1.9 3.3-3.3l1.6-2.75 7.65-13.25c.8-1.4 1.2-2.95 1.2-4.5h-27.502l5.852 11.5z" fill="#df4030"/><path d="m43.65 25 13.75-23.8c-1.35-.8-2.9-1.2-4.5-1.2h-18.5c-1.6 0-3.15.45-4.5 1.2z" fill="#17823a"/><path d="m59.8 53h-32.3l-13.75 23.8c1.35.8 2.9 1.2 4.5 1.2h50.8c1.6 0 3.15-.45 4.5-1.2z" fill="#3a7be6"/><path d="m73.4 26.5-12.7-22c-.8-1.4-1.95-2.5-3.3-3.3l-13.75 23.8 16.15 28h27.45c0-1.55-.4-3.1-1.2-4.5z" fill="#f7b50c"/></svg></div><div class="t" style="left:530.5px;top:738.15px;font-size:14px;font-weight:400;color:#2a2660;letter-spacing:0.34px;-webkit-text-stroke:0.3px #2a2660;">processors.csv</div><div class="t" style="left:530.5px;top:758.20px;font-size:13px;font-weight:400;color:#5a6bbf;letter-spacing:-0.12px;-webkit-text-stroke:0.3px #5a6bbf;">Scanned: 19 Jan 2026, 07:40 pm</div><svg style="position:absolute;left:787.7px;top:745.5px;" width="18" height="18" viewBox="0 0 18 18"><circle cx="9" cy="9" r="7.7" fill="none" stroke="#45bd80" stroke-width="1.3"/><path d="M6.3 9.5 L8 11 L11.4 8" fill="none" stroke="#45bd80" stroke-width="1.6" stroke-linecap="round" stroke-linejoin="round"/></svg><svg style="position:absolute;left:846.7px;top:744.0px;" width="20" height="20" viewBox="0 0 20 20"><path d="M10 3.3 L18.2 17 H1.8 Z" fill="none" stroke="#f2a43a" stroke-width="1.6" stroke-linejoin="round"/><path d="M10 8 V13.2" stroke="#f0a53e" stroke-width="1.3" stroke-linecap="round"/></svg><div style="position:absolute;left:970px;top:740.5px;white-space:nowrap;display:flex"><span style="display:inline-block;box-sizing:border-box;height:28px;line-height:27px;padding:0 7.1px 0 7.3px;border:1.5px solid #5d67a8;border-radius:4px;font-size:12px;color:#4b5798;margin-right:8px;letter-spacing:0.2px;-webkit-text-stroke:0.2px #4b5798;will-change:transform">URL</span><span style="display:inline-block;box-sizing:border-box;height:28px;line-height:27px;padding:0 7.1px 0 7.3px;border:1.5px solid #5d67a8;border-radius:4px;font-size:12px;color:#4b5798;margin-right:8px;letter-spacing:0.2px;-webkit-text-stroke:0.2px #4b5798;will-change:transform">PERSON</span><span style="display:inline-block;box-sizing:border-box;height:28px;line-height:27px;padding:0 7.1px 0 7.3px;border:1.5px solid #5d67a8;border-radius:4px;font-size:12px;color:#4b5798;margin-right:8px;letter-spacing:0.2px;-webkit-text-stroke:0.2px #4b5798;will-change:transform">NRP</span><span style="display:inline-block;box-sizing:border-box;height:28px;line-height:27px;padding:0 7.1px 0 7.3px;border:1.5px solid #5d67a8;border-radius:4px;font-size:12px;color:#4b5798;margin-right:8px;letter-spacing:0.2px;-webkit-text-stroke:0.2px #4b5798;will-change:transform">US_DRIVER_LICENSE</span><span style="display:inline-block;box-sizing:border-box;height:28px;line-height:27px;padding:0 7.1px 0 7.3px;border:1.5px solid #5d67a8;border-radius:4px;font-size:12px;color:#4b5798;margin-right:8px;letter-spacing:0.2px;-webkit-text-stroke:0.2px #4b5798;will-change:transform">PHONE_NUMBER</span><span style="display:inline-block;box-sizing:border-box;height:28px;line-height:27px;padding:0 7.1px 0 7.3px;border:1.5px solid #5d67a8;border-radius:4px;font-size:12px;color:#4b5798;margin-right:8px;letter-spacing:0.2px;-webkit-text-stroke:0.2px #4b5798;will-change:transform">IN_PAN</span><span style="display:inline-block;box-sizing:border-box;height:28px;line-height:27px;padding:0 7.1px 0 7.3px;border:1.5px solid #5d67a8;border-radius:4px;font-size:12px;color:#4b5798;margin-right:8px;letter-spacing:0.2px;-webkit-text-stroke:0.2px #4b5798;will-change:transform">LOCATION</span><span style="display:inline-block;box-sizing:border-box;height:28px;line-height:27px;padding:0 7.1px 0 7.3px;border:1.5px solid #5d67a8;border-radius:4px;font-size:12px;color:#4b5798;margin-right:8px;letter-spacing:0.2px;-webkit-text-stroke:0.2px #4b5798;will-change:transform">DATE_TIME</span></div><div style="position:absolute;left:1907.8px;top:741.8px;height:25.5px;padding:0 7.8px 0 8px;background:#f03571;border-radius:3px;color:#fff;font-size:13px;font-weight:700;line-height:25.5px;letter-spacing:0.6px;-webkit-text-stroke:0.3px #fff;box-shadow:0 1.5px 0 rgba(170,30,80,.45)">26%</div><svg style="position:absolute;left:2056px;top:745.7px;" width="18" height="18" viewBox="0 0 18 18"><circle cx="9" cy="9" r="7.6" fill="none" stroke="#c5cbd1" stroke-width="1.4"/><path d="M7.2 7.2 L10.8 10.8 M10.8 7.2 L7.2 10.8" stroke="#c5cbd1" stroke-width="1.3" stroke-linecap="round"/></svg><div style="position:absolute;left:376px;top:861.5px;width:1797px;height:1px;background:#eeeef2;"></div><div style="position:absolute;left:393px;top:809.5px;width:34px;height:34px;background:#fdfdfd;border-radius:8px;"></div><div style="position:absolute;left:396.2px;top:813.8px"><svg width="28.3" height="25.5" viewBox="0 0 87.3 78"><path d="m6.6 66.85 3.85 6.65c.8 1.4 1.95 2.5 3.3 3.3l13.75-23.8h-27.5c0 1.55.4 3.1 1.2 4.5z" fill="#1a5fc8"/><path d="m43.65 25-13.75-23.8c-1.35.8-2.5 1.9-3.3 3.3l-25.4 44a9.06 9.06 0 0 0 -1.2 4.5h27.5z" fill="#2f9e4b"/><path d="m73.55 76.8c1.35-.8 2.5-1.9 3.3-3.3l1.6-2.75 7.65-13.25c.8-1.4 1.2-2.95 1.2-4.5h-27.502l5.852 11.5z" fill="#df4030"/><path d="m43.65 25 13.75-23.8c-1.35-.8-2.9-1.2-4.5-1.2h-18.5c-1.6 0-3.15.45-4.5 1.2z" fill="#17823a"/><path d="m59.8 53h-32.3l-13.75 23.8c1.35.8 2.9 1.2 4.5 1.2h50.8c1.6 0 3.15-.45 4.5-1.2z" fill="#3a7be6"/><path d="m73.4 26.5-12.7-22c-.8-1.4-1.95-2.5-3.3-3.3l-13.75 23.8 16.15 28h27.45c0-1.55-.4-3.1-1.2-4.5z" fill="#f7b50c"/></svg></div><div class="t" style="left:530.5px;top:810.15px;font-size:14px;font-weight:400;color:#2a2660;letter-spacing:0.4px;-webkit-text-stroke:0.3px #2a2660;">policies.csv</div><div class="t" style="left:530.5px;top:830.20px;font-size:13px;font-weight:400;color:#5a6bbf;letter-spacing:-0.12px;-webkit-text-stroke:0.3px #5a6bbf;">Scanned: 19 Jan 2026, 07:40 pm</div><svg style="position:absolute;left:787.7px;top:817.5px;" width="18" height="18" viewBox="0 0 18 18"><circle cx="9" cy="9" r="7.7" fill="none" stroke="#45bd80" stroke-width="1.3"/><path d="M6.3 9.5 L8 11 L11.4 8" fill="none" stroke="#45bd80" stroke-width="1.6" stroke-linecap="round" stroke-linejoin="round"/></svg><svg style="position:absolute;left:846.7px;top:816.0px;" width="20" height="20" viewBox="0 0 20 20"><path d="M10 3.3 L18.2 17 H1.8 Z" fill="none" stroke="#f2a43a" stroke-width="1.6" stroke-linejoin="round"/><path d="M10 8 V13.2" stroke="#f0a53e" stroke-width="1.3" stroke-linecap="round"/></svg><div style="position:absolute;left:970px;top:812.5px;white-space:nowrap;display:flex"><span style="display:inline-block;box-sizing:border-box;height:28px;line-height:27px;padding:0 7.1px 0 7.3px;border:1.5px solid #5d67a8;border-radius:4px;font-size:12px;color:#4b5798;margin-right:8px;letter-spacing:0.2px;-webkit-text-stroke:0.2px #4b5798;will-change:transform">US_DRIVER_LICENSE</span><span style="display:inline-block;box-sizing:border-box;height:28px;line-height:27px;padding:0 7.1px 0 7.3px;border:1.5px solid #5d67a8;border-radius:4px;font-size:12px;color:#4b5798;margin-right:8px;letter-spacing:0.2px;-webkit-text-stroke:0.2px #4b5798;will-change:transform">DATE_TIME</span><span style="display:inline-block;box-sizing:border-box;height:28px;line-height:27px;padding:0 7.1px 0 7.3px;border:1.5px solid #5d67a8;border-radius:4px;font-size:12px;color:#4b5798;margin-right:8px;letter-spacing:0.2px;-webkit-text-stroke:0.2px #4b5798;will-change:transform">IN_PAN</span><span style="display:inline-block;box-sizing:border-box;height:28px;line-height:27px;padding:0 7.1px 0 7.3px;border:1.5px solid #5d67a8;border-radius:4px;font-size:12px;color:#4b5798;margin-right:8px;letter-spacing:0.2px;-webkit-text-stroke:0.2px #4b5798;will-change:transform">PERSON</span><span style="display:inline-block;box-sizing:border-box;height:28px;line-height:27px;padding:0 7.1px 0 7.3px;border:1.5px solid #5d67a8;border-radius:4px;font-size:12px;color:#4b5798;margin-right:8px;letter-spacing:0.2px;-webkit-text-stroke:0.2px #4b5798;will-change:transform">PHONE_NUMBER</span><span style="display:inline-block;box-sizing:border-box;height:28px;line-height:27px;padding:0 7.1px 0 7.3px;border:1.5px solid #5d67a8;border-radius:4px;font-size:12px;color:#4b5798;margin-right:8px;letter-spacing:0.2px;-webkit-text-stroke:0.2px #4b5798;will-change:transform">LOCATION</span></div><div style="position:absolute;left:1907.8px;top:813.8px;height:25.5px;padding:0 7.8px 0 8px;background:#f03571;border-radius:3px;color:#fff;font-size:13px;font-weight:700;line-height:25.5px;letter-spacing:0.6px;-webkit-text-stroke:0.3px #fff;box-shadow:0 1.5px 0 rgba(170,30,80,.45)">45%</div><svg style="position:absolute;left:2056px;top:817.7px;" width="18" height="18" viewBox="0 0 18 18"><circle cx="9" cy="9" r="7.6" fill="none" stroke="#c5cbd1" stroke-width="1.4"/><path d="M7.2 7.2 L10.8 10.8 M10.8 7.2 L7.2 10.8" stroke="#c5cbd1" stroke-width="1.3" stroke-linecap="round"/></svg><div style="position:absolute;left:393px;top:881.5px;width:34px;height:34px;background:#fdfdfd;border-radius:8px;"></div><div style="position:absolute;left:396.2px;top:885.8px"><svg width="28.3" height="25.5" viewBox="0 0 87.3 78"><path d="m6.6 66.85 3.85 6.65c.8 1.4 1.95 2.5 3.3 3.3l13.75-23.8h-27.5c0 1.55.4 3.1 1.2 4.5z" fill="#1a5fc8"/><path d="m43.65 25-13.75-23.8c-1.35.8-2.5 1.9-3.3 3.3l-25.4 44a9.06 9.06 0 0 0 -1.2 4.5h27.5z" fill="#2f9e4b"/><path d="m73.55 76.8c1.35-.8 2.5-1.9 3.3-3.3l1.6-2.75 7.65-13.25c.8-1.4 1.2-2.95 1.2-4.5h-27.502l5.852 11.5z" fill="#df4030"/><path d="m43.65 25 13.75-23.8c-1.35-.8-2.9-1.2-4.5-1.2h-18.5c-1.6 0-3.15.45-4.5 1.2z" fill="#17823a"/><path d="m59.8 53h-32.3l-13.75 23.8c1.35.8 2.9 1.2 4.5 1.2h50.8c1.6 0 3.15-.45 4.5-1.2z" fill="#3a7be6"/><path d="m73.4 26.5-12.7-22c-.8-1.4-1.95-2.5-3.3-3.3l-13.75 23.8 16.15 28h27.45c0-1.55-.4-3.1-1.2-4.5z" fill="#f7b50c"/></svg></div><div class="t" style="left:530.5px;top:882.15px;font-size:14px;font-weight:400;color:#2a2660;letter-spacing:0.5px;-webkit-text-stroke:0.3px #2a2660;">notices.csv</div><div class="t" style="left:530.5px;top:902.20px;font-size:13px;font-weight:400;color:#5a6bbf;letter-spacing:-0.12px;-webkit-text-stroke:0.3px #5a6bbf;">Scanned: 19 Jan 2026, 07:40 pm</div><svg style="position:absolute;left:787.7px;top:889.5px;" width="18" height="18" viewBox="0 0 18 18"><circle cx="9" cy="9" r="7.7" fill="none" stroke="#45bd80" stroke-width="1.3"/><path d="M6.3 9.5 L8 11 L11.4 8" fill="none" stroke="#45bd80" stroke-width="1.6" stroke-linecap="round" stroke-linejoin="round"/></svg><svg style="position:absolute;left:846.7px;top:888.0px;" width="20" height="20" viewBox="0 0 20 20"><path d="M10 3.3 L18.2 17 H1.8 Z" fill="none" stroke="#f2a43a" stroke-width="1.6" stroke-linejoin="round"/><path d="M10 8 V13.2" stroke="#f0a53e" stroke-width="1.3" stroke-linecap="round"/></svg><div style="position:absolute;left:970px;top:884.5px;white-space:nowrap;display:flex"><span style="display:inline-block;box-sizing:border-box;height:28px;line-height:27px;padding:0 7.1px 0 7.3px;border:1.5px solid #5d67a8;border-radius:4px;font-size:12px;color:#4b5798;margin-right:8px;letter-spacing:0.2px;-webkit-text-stroke:0.2px #4b5798;will-change:transform">IN_PASSPORT</span><span style="display:inline-block;box-sizing:border-box;height:28px;line-height:27px;padding:0 7.1px 0 7.3px;border:1.5px solid #5d67a8;border-radius:4px;font-size:12px;color:#4b5798;margin-right:8px;letter-spacing:0.2px;-webkit-text-stroke:0.2px #4b5798;will-change:transform">US_DRIVER_LICENSE</span><span style="display:inline-block;box-sizing:border-box;height:28px;line-height:27px;padding:0 7.1px 0 7.3px;border:1.5px solid #5d67a8;border-radius:4px;font-size:12px;color:#4b5798;margin-right:8px;letter-spacing:0.2px;-webkit-text-stroke:0.2px #4b5798;will-change:transform">LOCATION</span><span style="display:inline-block;box-sizing:border-box;height:28px;line-height:27px;padding:0 7.1px 0 7.3px;border:1.5px solid #5d67a8;border-radius:4px;font-size:12px;color:#4b5798;margin-right:8px;letter-spacing:0.2px;-webkit-text-stroke:0.2px #4b5798;will-change:transform">PHONE_NUMBER</span><span style="display:inline-block;box-sizing:border-box;height:28px;line-height:27px;padding:0 7.1px 0 7.3px;border:1.5px solid #5d67a8;border-radius:4px;font-size:12px;color:#4b5798;margin-right:8px;letter-spacing:0.2px;-webkit-text-stroke:0.2px #4b5798;will-change:transform">IN_PAN</span><span style="display:inline-block;box-sizing:border-box;height:28px;line-height:27px;padding:0 7.1px 0 7.3px;border:1.5px solid #5d67a8;border-radius:4px;font-size:12px;color:#4b5798;margin-right:8px;letter-spacing:0.2px;-webkit-text-stroke:0.2px #4b5798;will-change:transform">DATE_TIME</span><span style="display:inline-block;box-sizing:border-box;height:28px;line-height:27px;padding:0 7.1px 0 7.3px;border:1.5px solid #5d67a8;border-radius:4px;font-size:12px;color:#4b5798;margin-right:8px;letter-spacing:0.2px;-webkit-text-stroke:0.2px #4b5798;will-change:transform">US_BANK_NUMBER</span></div><div style="position:absolute;left:1907.8px;top:885.8px;height:25.5px;padding:0 7.8px 0 8px;background:#f03571;border-radius:3px;color:#fff;font-size:13px;font-weight:700;line-height:25.5px;letter-spacing:0.6px;-webkit-text-stroke:0.3px #fff;box-shadow:0 1.5px 0 rgba(170,30,80,.45)">37%</div><svg style="position:absolute;left:2056px;top:889.7px;" width="18" height="18" viewBox="0 0 18 18"><circle cx="9" cy="9" r="7.6" fill="none" stroke="#c5cbd1" stroke-width="1.4"/><path d="M7.2 7.2 L10.8 10.8 M10.8 7.2 L7.2 10.8" stroke="#c5cbd1" stroke-width="1.3" stroke-linecap="round"/></svg><div style="position:absolute;left:352px;top:958px;width:1845px;height:1px;background:#efeff3;"></div><div class="t" style="left:376.7px;top:985.55px;font-size:14px;font-weight:400;color:#3e3970;letter-spacing:0.26px;-webkit-text-stroke:0.3px #3e3970;">Entries per page:</div><div class="t" style="left:505.4px;top:985.55px;font-size:14px;font-weight:400;color:#1c1850;letter-spacing:0.3px;-webkit-text-stroke:0.5px #1c1850;">10</div><svg style="position:absolute;left:527.5px;top:990px;" width="14" height="8" viewBox="0 0 14 8"><path d="M1 1 H13 L7 7.5 Z" fill="#1c1850" stroke="#1c1850" stroke-width="1" stroke-linejoin="round"/></svg><div class="t" style="right:199.80000000000018px;top:985.85px;font-size:14px;font-weight:400;color:#3e3970;letter-spacing:0.42px;-webkit-text-stroke:0.3px #3e3970;">Showing 1-6 of 6 entries</div><svg style="position:absolute;left:2120px;top:987px;" width="12" height="13" viewBox="0 0 12 13"><path d="M9 1.2 L3.5 6.5 L9 11.8" fill="none" stroke="#b4b8d0" stroke-width="1.3"/></svg><svg style="position:absolute;left:2152px;top:987px;" width="12" height="13" viewBox="0 0 12 13"><path d="M3 1.2 L8.5 6.5 L3 11.8" fill="none" stroke="#b4b8d0" stroke-width="1.3"/></svg><div style="position:absolute;left:352px;top:1050.5px;width:1845px;height:400px;background:#fdfdfd;border-radius:9px;box-shadow:2px 3px 6px rgba(93,80,200,0.10);"></div><svg style="position:absolute;left:371px;top:1070px;" width="27" height="27" viewBox="0 0 27 27"><polygon points="21.88,11.50 21.64,12.16 21.03,12.76 19.93,13.18 19.81,13.73 19.64,14.26 19.45,14.79 19.21,15.30 18.95,15.80 19.32,16.72 19.48,17.63 19.28,18.33 18.84,18.84 18.20,19.14 17.35,19.13 16.28,18.65 15.80,18.95 15.30,19.21 14.79,19.45 14.26,19.64 13.73,19.81 13.33,20.72 12.81,21.48 12.18,21.83 11.50,21.88 10.84,21.64 10.24,21.03 9.82,19.93 9.27,19.81 8.74,19.64 8.21,19.45 7.70,19.21 7.20,18.95 6.28,19.32 5.37,19.48 4.67,19.28 4.16,18.84 3.86,18.20 3.87,17.35 4.35,16.28 4.05,15.80 3.79,15.30 3.55,14.79 3.36,14.26 3.19,13.73 2.28,13.33 1.52,12.81 1.17,12.18 1.12,11.50 1.36,10.84 1.97,10.24 3.07,9.82 3.19,9.27 3.36,8.74 3.55,8.21 3.79,7.70 4.05,7.20 3.68,6.28 3.52,5.37 3.72,4.67 4.16,4.16 4.80,3.86 5.65,3.87 6.72,4.35 7.20,4.05 7.70,3.79 8.21,3.55 8.74,3.36 9.27,3.19 9.67,2.28 10.19,1.52 10.82,1.17 11.50,1.12 12.16,1.36 12.76,1.97 13.18,3.07 13.73,3.19 14.26,3.36 14.79,3.55 15.30,3.79 15.80,4.05 16.72,3.68 17.63,3.52 18.33,3.72 18.84,4.16 19.14,4.80 19.13,5.65 18.65,6.72 18.95,7.20 19.21,7.70 19.45,8.21 19.64,8.74 19.81,9.27 20.72,9.67 21.48,10.19 21.83,10.82" fill="none" stroke="#8192d2" stroke-width="1.1" stroke-linejoin="round"/><circle cx="11.5" cy="11.5" r="3.3" fill="none" stroke="#8192d2" stroke-width="1.1"/><path d="M19.5 18 L25.5 21.3 L19.5 24.6 Z" fill="#fdfdfd" stroke="#8192d2" stroke-width="1.1" stroke-linejoin="round"/></svg><div class="t" style="left:406.5px;top:1072.55px;font-size:22.5px;font-weight:700;color:#1c1850;letter-spacing:0.53px;">Profiling &amp; Automated Decisions</div><div class="t" style="left:406px;top:1101.35px;font-size:14px;font-weight:400;color:#5a6bbf;letter-spacing:0.45px;-webkit-text-stroke:0.3px #5a6bbf;">Showing 3 processors linked to Dxtra Inc.</div><svg style="position:absolute;left:2158px;top:1068px;" width="22" height="22" viewBox="0 0 22 22"><g fill="none" stroke="#8a92cc" stroke-width="1.2" stroke-linecap="round"><path d="M18.8 9 A8 8 0 0 0 4.5 6.2"/><path d="M3.2 13 A8 8 0 0 0 17.5 15.8"/><path d="M4.2 2.5 V6.5 H8.2"/><path d="M17.8 19.5 V15.5 H13.8"/></g></svg><div style="position:absolute;left:376px;top:1148.5px;width:1797px;height:300px;background:#fafafa;border-radius:8px;"></div><div class="t" style="left:392px;top:1161.65px;font-size:14px;font-weight:400;color:#3b3670;letter-spacing:-0.05px;-webkit-text-stroke:0.3px #3b3670;">CONTROLLER/PROCESSOR</div><div class="t" style="left:611.2px;top:1161.65px;font-size:14px;font-weight:400;color:#3b3670;letter-spacing:-0.5px;-webkit-text-stroke:0.3px #3b3670;">PURPOSE</div><div class="t" style="right:143.5px;top:1161.65px;font-size:14px;font-weight:400;color:#3b3670;letter-spacing:0.05px;-webkit-text-stroke:0.3px #3b3670;">DESCRIPTION</div><div style="position:absolute;left:376px;top:1190px;width:1797px;height:1px;background:#eeeef2;"></div><svg style="position:absolute;left:393px;top:1212px;" width="33" height="32" viewBox="0 0 33 32"><g fill="#174a52"><path d="M0 0 H7.1 L15.6 7.7 L7.9 15.7 L0 7.8 Z"/><path d="M0 23.6 L7.9 15.7 L15.6 23.4 L8.3 31.6 H0 Z"/><path d="M16.4 0 H24.4 L32.8 8.4 V23.4 L24.4 31.6 H16.4 V23.4 L24.4 15.7 L16.4 7.7 Z"/></g></svg><div class="t" style="left:611.5px;top:1209.65px;font-size:14px;font-weight:400;color:#34306a;letter-spacing:0.4px;-webkit-text-stroke:0.3px #34306a;">(i) Personalise audience targeting; (ii) Deliver messages at optimal moments; (iii) Prevent over-messaging;</div><div class="t" style="left:611.5px;top:1229.65px;font-size:14px;font-weight:400;color:#34306a;letter-spacing:0.47px;-webkit-text-stroke:0.3px #34306a;">(iv) Protect sender reputation and legal compliance; (v) Maintain accurate engagement analytics.</div><div class="t" style="right:143.5px;top:1209.65px;font-size:14px;font-weight:400;color:#34306a;letter-spacing:0.5px;-webkit-text-stroke:0.3px #34306a;">AI segment creation, send-time optimisation, frequency capping, deliverability suppression, SMS compliance filtering,</div><div class="t" style="right:143.5px;top:1229.65px;font-size:14px;font-weight:400;color:#34306a;letter-spacing:0.5px;-webkit-text-stroke:0.3px #34306a;">and bot-interaction detection - each relying on machine-learning-based profiling and automated decision engines.</div><div style="position:absolute;left:376px;top:1263px;width:1797px;height:1px;background:#eeeef2;"></div><svg style="position:absolute;left:392px;top:1287px;" width="37" height="13" viewBox="0 0 37 13"><path d="M0 0 H8.2 V13.5 H0Z" fill="#1d7fae"/><path d="M0 4 L8.2 12 V13.5 H0Z" fill="#3fa6d3"/><path d="M8.2 0 L16.5 13.5 H8.2Z" fill="#161616"/><path d="M28.8 0 V13.5 H20Z" fill="#e99a3c"/><path d="M28.8 0 H36.3 V13.5 H28.8Z" fill="#c21f30"/><path d="M28.8 0 H34 L28.8 8Z" fill="#8f1a26"/></svg><div class="t" style="left:611.5px;top:1284.15px;font-size:14px;font-weight:400;color:#34306a;letter-spacing:0.47px;-webkit-text-stroke:0.3px #34306a;">(i) Ensure lawful, timely delivery of one-to-one system emails; (ii) Detect and block spam, phishing or</div><div class="t" style="right:143.5px;top:1284.15px;font-size:14px;font-weight:400;color:#34306a;letter-spacing:0.5px;-webkit-text-stroke:0.3px #34306a;">Deliverability management, spam/abuse prevention, bounce handling, sender-IP warm-up and quota throttling via</div><div style="position:absolute;left:304px;top:1300.5px;width:1940px;height:58px;background:#f3f4f8;"></div><div class="t" style="left:336.7px;top:1323.72px;font-size:12.5px;font-weight:400;color:#3e3972;letter-spacing:0.23px;-webkit-text-stroke:0.3px #3e3972;">Copyright © 2026 Dxtra Inc. All rights reserved.</div><div class="t" style="left:1850px;top:1323.89px;font-size:12.3px;font-weight:400;color:#3e3972;letter-spacing:0px;-webkit-text-stroke:0.3px #3e3972;">Legal</div><div style="position:absolute;left:1906px;top:1322.6px;width:2px;height:15px;background:#2c2860;"></div><div class="t" style="left:1933.5px;top:1323.72px;font-size:12.5px;font-weight:400;color:#3e3972;letter-spacing:0.3px;-webkit-text-stroke:0.3px #3e3972;">System Status</div><div style="position:absolute;left:2042px;top:1322.6px;width:2px;height:15px;background:#2c2860;"></div><div class="t" style="left:2070px;top:1323.72px;font-size:12.5px;font-weight:400;color:#3e3972;letter-spacing:0.18px;-webkit-text-stroke:0.3px #3e3972;">Transparency Center</div>
</div></div>
</body></html>
